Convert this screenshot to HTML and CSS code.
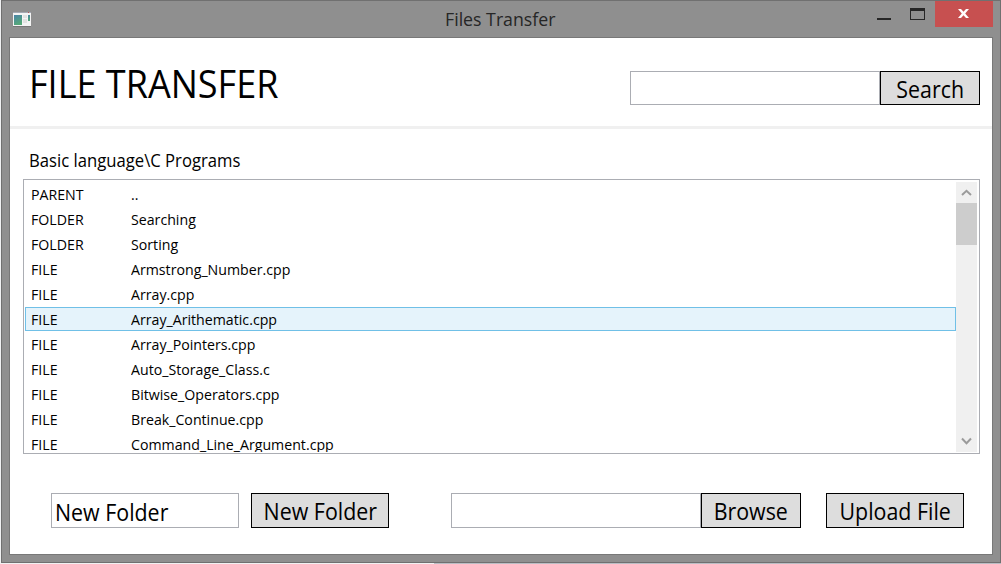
FILE: index.html
```html
<!DOCTYPE html>
<html lang="en">
<head>
<meta charset="utf-8">
<title>Files Transfer</title>
<link rel="stylesheet" href="styles.css">
</head>
<body>
<div class="window">
  <header class="titlebar">
    <svg class="app-icon" width="18" height="16" viewBox="0 0 18 16">
      <defs><linearGradient id="pane" x1="0" y1="0" x2="0.4" y2="1"><stop offset="0" stop-color="#4a84a8"/><stop offset="1" stop-color="#55a878"/></linearGradient></defs>
      <rect y="1" width="18" height="14" fill="#777"/>
      <rect width="18" height="14" fill="#f4f4f4"/>
      <rect width="18" height="1" fill="#a5a9b3"/>
      <rect x="15" width="1" height="1" fill="#b55"/>
      <rect x="1" y="3" width="8" height="10" fill="url(#pane)"/>
      <path d="M10 3h4v3h-4zM10 7h4v4h-4z" fill="#e2e2e2"/>
      <rect x="15" y="3" width="2" height="6" fill="url(#pane)"/>
    </svg>
    <div class="caption"><span class="t caption-text">Files Transfer</span></div>
    <div class="controls">
      <svg width="58" height="26" viewBox="0 0 58 26" shape-rendering="crispEdges">
        <rect y="17" width="14" height="2" fill="#262626"/>
        <path d="M33 7h15v12H33zM34 10v8h13v-8z" fill="#262626" fill-rule="evenodd"/>
      </svg>
      <div class="close">
        <svg width="11" height="9" viewBox="0 0 11 9"><path d="M0 0h3l2.5 2.7L8 0h3L7.2 4.5 11 9H8L5.5 6.3 3 9H0l3.8-4.5z" fill="#fff"/></svg>
      </div>
    </div>
  </header>
  <main class="client">
    <section class="top">
      <h1><span class="t title-text">FILE TRANSFER</span></h1>
      <div class="field search-field"></div>
      <div class="button search"><span class="t">Search</span></div>
    </section>
    <div class="path"><span class="t path-text">Basic language\C Programs</span></div>
    <div class="list">
      <div class="rows">
        <div class="row"><span class="kind t">PARENT</span><span class="t">..</span></div>
        <div class="row"><span class="kind t">FOLDER</span><span class="t">Searching</span></div>
        <div class="row"><span class="kind t">FOLDER</span><span class="t">Sorting</span></div>
        <div class="row"><span class="kind t">FILE</span><span class="t">Armstrong_Number.cpp</span></div>
        <div class="row"><span class="kind t">FILE</span><span class="t">Array.cpp</span></div>
        <div class="row selected"><span class="kind t">FILE</span><span class="t">Array_Arithematic.cpp</span></div>
        <div class="row"><span class="kind t">FILE</span><span class="t">Array_Pointers.cpp</span></div>
        <div class="row"><span class="kind t">FILE</span><span class="t">Auto_Storage_Class.c</span></div>
        <div class="row"><span class="kind t">FILE</span><span class="t">Bitwise_Operators.cpp</span></div>
        <div class="row"><span class="kind t">FILE</span><span class="t">Break_Continue.cpp</span></div>
        <div class="row"><span class="kind t">FILE</span><span class="t">Command_Line_Argument.cpp</span></div>
      </div>
      <div class="scrollbar">
        <svg class="arrow" width="21" height="21" viewBox="0 0 21 21"><path d="M6 13l4.5-4.2L15 13" fill="none" stroke="#9b9b9b" stroke-width="2"/></svg>
        <div class="thumb"></div>
        <svg class="arrow last" width="21" height="21" viewBox="0 0 21 21"><path d="M6 7.5l4.5 4.7L15 7.5" fill="none" stroke="#9b9b9b" stroke-width="2"/></svg>
      </div>
    </div>
    <section class="bottom">
      <div class="field folder-field"><span class="t">New Folder</span></div>
      <div class="button folder"><span class="t">New Folder</span></div>
      <div class="field file-field"></div>
      <div class="button browse"><span class="t">Browse</span></div>
      <div class="button upload"><span class="t">Upload File</span></div>
    </section>
  </main>
</div>
<div class="edge"></div>
</body>
</html>
```
FILE: styles.css
```css
* { box-sizing: border-box; }
body {
  margin: 0;
  width: 1001px;
  height: 564px;
  overflow: hidden;
  background: #f0f1f2;
  font-family: "Open Sans", "Noto Sans", sans-serif;
  color: #000;
}
svg { display: block; flex: none; }
.t { display: inline-block; white-space: nowrap; transform-origin: 0 50%; }
.window {
  margin-left: 1px;
  width: 1000px;
  height: 563px;
  border: 1px solid #707070;
  background: #8f8f8f;
  padding: 0 6px 7px 7px;
}
.titlebar { display: flex; height: 36px; }
.app-icon { margin: 11px 0 0 4px; }
.caption { width: 414px; margin-left: 414px; line-height: 36px; font-size: 18px; color: #262626; }
.caption-text { transform: scaleX(.985); }
.controls { display: flex; margin-left: 18px; }
.close {
  display: flex;
  width: 58px;
  height: 26px;
  padding: 8px 0 0 23px;
  background: #c75050;
}
.client {
  width: 984px;
  height: 518px;
  border: 1px solid #787878;
  background: #fff;
}
.top {
  display: flex;
  height: 91px;
  border-bottom: 3px solid #f0f0f0;
  padding: 33px 12px 0 19px;
}
h1 { margin: -14px 0 0; width: 601px; font-size: 38px; font-weight: 400; line-height: 52px; }
.title-text { transform: scaleX(.948); }
.field { flex: none; border: 1px solid #abadb3; background: #fff; }
.button {
  display: flex;
  flex: none;
  justify-content: center;
  align-items: center;
  border: 1px solid #000;
  background: #ddd;
  font-size: 23.5px;
  line-height: 32px;
}
.button .t { padding-top: 1px; transform-origin: 50% 50%; transform: scaleX(.91); }
.search-field { width: 250px; height: 34px; }
.search { width: 100px; height: 34px; }
.path { height: 50px; padding: 17px 0 0 19px; font-size: 18px; line-height: 28px; }
.path-text { transform: scaleX(.926); }
.list {
  display: flex;
  width: 957px;
  height: 275px;
  margin-left: 13px;
  border: 1px solid #abadb3;
  padding: 2px 2px 1px 1px;
}
.rows { width: 931px; overflow: hidden; font-size: 14.6px; }
.row {
  display: flex;
  height: 24px;
  margin-bottom: 1px;
  padding-left: 5px;
  border: 1px solid transparent;
  line-height: 22px;
}
.row .t { transform: scaleX(.971); }
.row .kind { width: 100px; }
.selected { border-color: #70c0e7; background: #e5f3fb; }
.scrollbar { display: flex; flex-direction: column; width: 21px; background: #f0f0f0; }
.thumb { height: 42px; background: #cdcdcd; }
.last { margin-top: auto; }
.bottom { display: flex; margin: 39px 0 0 41px; font-size: 23.5px; }
.bottom > div { height: 35px; }
.folder-field { width: 188px; padding-left: 3px; line-height: 36px; }
.folder-field .t { transform: scaleX(.91); }
.folder { width: 138px; margin-left: 12px; }
.file-field { width: 250px; margin-left: 62px; }
.browse { width: 100px; }
.upload { width: 138px; margin-left: 25px; }
.edge { height: 1px; margin-left: 434px; background: #b9bec4; }
```
